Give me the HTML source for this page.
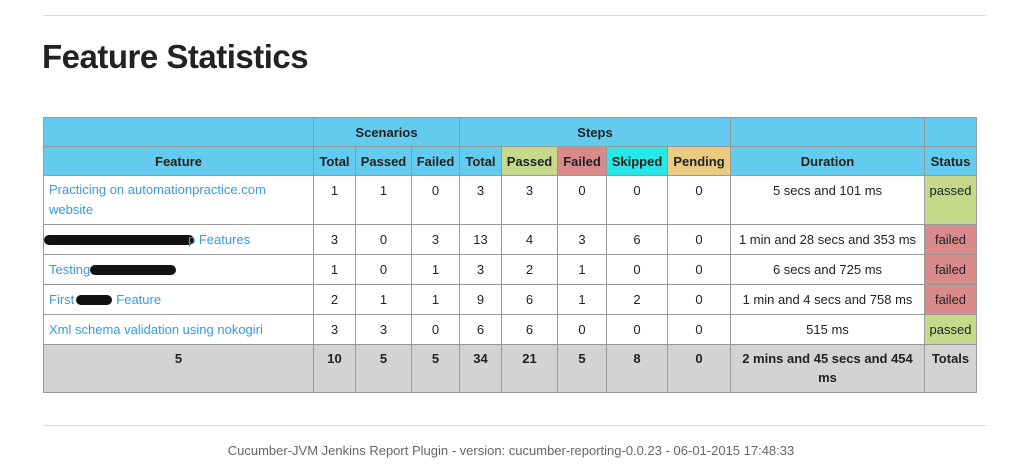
<!DOCTYPE html>
<html><head><meta charset="utf-8"><style>
body{margin:0;background:#fff;font-family:"Liberation Sans",Arial,sans-serif;width:1024px;height:468px;overflow:hidden;position:relative}
.hr{position:absolute;left:43px;width:944px;height:1px;background:#ddd}
h1{position:absolute;left:42px;top:38px;margin:0;font-size:33px;font-weight:bold;color:#222;letter-spacing:-0.5px}
table{position:absolute;left:43px;top:117px;border-collapse:collapse;table-layout:fixed;font-size:13px;color:#222}
td,th{border:1px solid #999;text-align:center;padding:0;vertical-align:middle;overflow:hidden;white-space:nowrap}
th{background:#63cbee;font-weight:bold;height:28px}
td{height:29px}
td.f{text-align:left;padding-left:5px;color:#3a9ad9;line-height:20px}
.p{background:#c6d98a}.x{background:#d98b8b}.s{background:#2be6e6}.pe{background:#e9cc82}
tr.t td{background:#d3d3d3;font-weight:bold;vertical-align:top;line-height:19px;white-space:normal}
tr.r1 td{height:41px;vertical-align:top;padding-top:7px}
tr.t td{height:43px;padding-top:4px}
.blot{display:inline-block;background:#111;border-radius:6px;height:10px;vertical-align:middle}
.foot{position:absolute;top:443px;left:0;width:1022px;text-align:center;font-size:13px;color:#666}
</style></head><body>
<div class="hr" style="top:15px"></div>
<h1>Feature Statistics</h1>
<table>
<colgroup><col style="width:270px"><col style="width:42px"><col style="width:56px"><col style="width:48px"><col style="width:42px"><col style="width:56px"><col style="width:49px"><col style="width:61px"><col style="width:63px"><col style="width:194px"><col style="width:52px"></colgroup>
<tr><th></th><th colspan="3">Scenarios</th><th colspan="5">Steps</th><th></th><th></th></tr>
<tr><th>Feature</th><th>Total</th><th>Passed</th><th>Failed</th><th>Total</th><th class="p">Passed</th><th class="x">Failed</th><th class="s">Skipped</th><th class="pe">Pending</th><th>Duration</th><th>Status</th></tr>
<tr class="r1"><td class="f" style="padding-top:4px;height:44px">Practicing on automationpractice.com<br>website</td><td>1</td><td>1</td><td>0</td><td>3</td><td>3</td><td>0</td><td>0</td><td>0</td><td>5 secs and 101 ms</td><td class="p">passed</td></tr>
<tr><td class="f" style="padding-left:0"><span class="blot" style="width:150px;margin-right:-6px"></span>p Features</td><td>3</td><td>0</td><td>3</td><td>13</td><td>4</td><td>3</td><td>6</td><td>0</td><td>1 min and 28 secs and 353 ms</td><td class="x">failed</td></tr>
<tr><td class="f">Testing<span class="blot" style="width:86px"></span></td><td>1</td><td>0</td><td>1</td><td>3</td><td>2</td><td>1</td><td>0</td><td>0</td><td>6 secs and 725 ms</td><td class="x">failed</td></tr>
<tr><td class="f">First<span class="blot" style="width:36px;margin:0 4px 0 2px"></span>Feature</td><td>2</td><td>1</td><td>1</td><td>9</td><td>6</td><td>1</td><td>2</td><td>0</td><td>1 min and 4 secs and 758 ms</td><td class="x">failed</td></tr>
<tr><td class="f">Xml schema validation using nokogiri</td><td>3</td><td>3</td><td>0</td><td>6</td><td>6</td><td>0</td><td>0</td><td>0</td><td>515 ms</td><td class="p">passed</td></tr>
<tr class="t"><td>5</td><td>10</td><td>5</td><td>5</td><td>34</td><td>21</td><td>5</td><td>8</td><td>0</td><td>2 mins and 45 secs and 454<br>ms</td><td>Totals</td></tr>
</table>
<div class="hr" style="top:425px"></div>
<div class="foot">Cucumber-JVM Jenkins Report Plugin - version: cucumber-reporting-0.0.23 - 06-01-2015 17:48:33</div>
</body></html>
